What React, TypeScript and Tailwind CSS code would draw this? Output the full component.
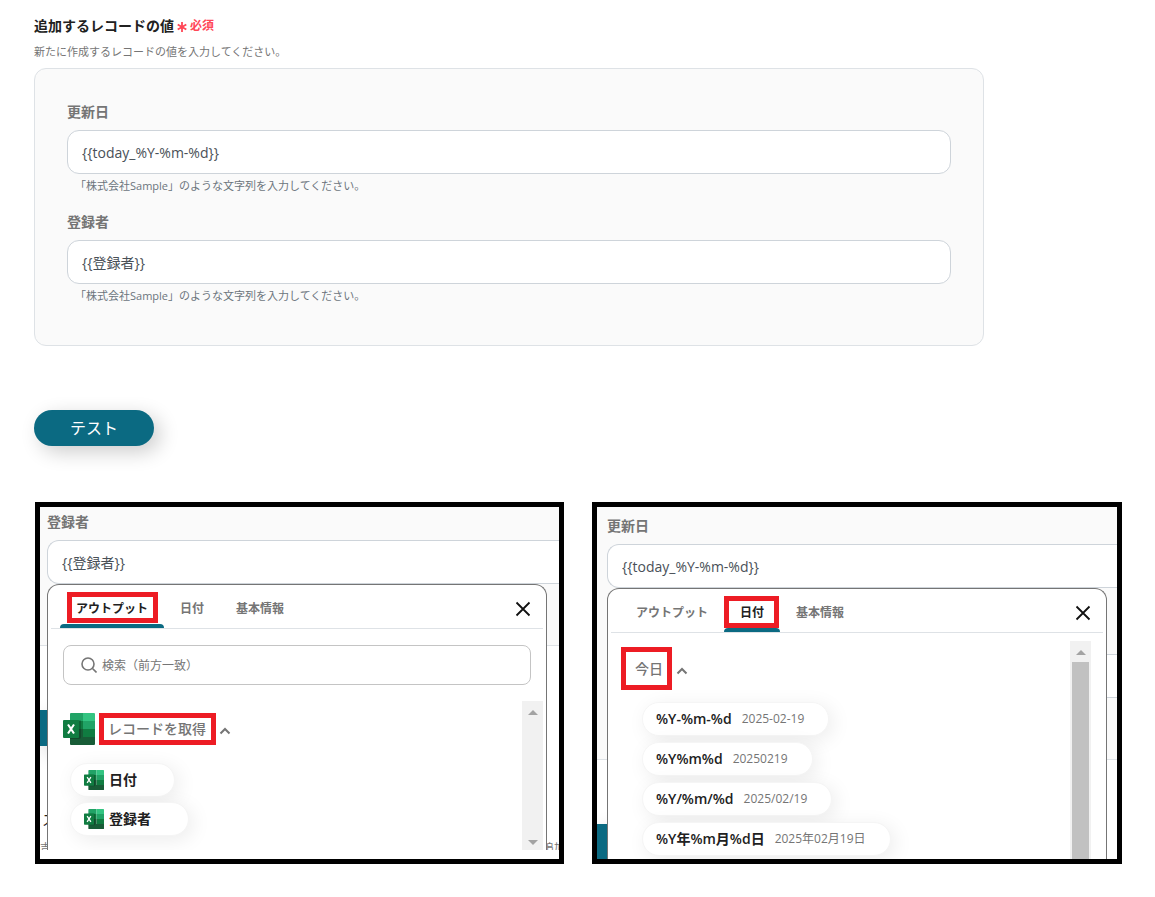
import React, { useState } from 'react';

type TabId = 'output' | 'date' | 'basic';

const tabs: { id: TabId; label: string }[] = [
  { id: 'output', label: 'アウトプット' },
  { id: 'date', label: '日付' },
  { id: 'basic', label: '基本情報' },
];

const dateFormats = [
  { format: '%Y-%m-%d', example: '2025-02-19' },
  { format: '%Y%m%d', example: '20250219' },
  { format: '%Y/%m/%d', example: '2025/02/19' },
  { format: '%Y年%m月%d日', example: '2025年02月19日' },
];

function ExcelIcon({ className }: { className: string }) {
  return (
    <svg viewBox="0 0 32 32" className={className} aria-hidden="true">
      <path d="M8 0h12v8H7V1a1 1 0 0 1 1-1z" fill="#21a366" />
      <path d="M20 0h11a1 1 0 0 1 1 1v7H20z" fill="#33c481" />
      <path d="M7 8h13v8H7z" fill="#107c41" />
      <path d="M20 8h12v8H20z" fill="#21a366" />
      <path d="M20 16h12v8H20z" fill="#107c41" />
      <path d="M7 16h13v8h12v7a1 1 0 0 1-1 1H8a1 1 0 0 1-1-1z" fill="#185c37" />
      <path d="M7 7h10a1 1 0 0 1 1 1v16a2 2 0 0 1-2 2H7z" fill="#000" opacity=".2" />
      <rect y="7" width="16" height="18" rx="1" fill="#107c41" />
      <path d="M5 11.5l6 9M11 11.5l-6 9" stroke="#fff" strokeWidth="2.1" fill="none" />
    </svg>
  );
}

function ChevronUp() {
  return (
    <svg viewBox="0 0 12 8" className="h-2 w-3" fill="none" stroke="#757575" strokeWidth="2" aria-hidden="true">
      <path d="M1.5 6.5L6 2l4.5 4.5" />
    </svg>
  );
}

function Arrow({ down }: { down?: boolean }) {
  return (
    <svg viewBox="0 0 10 5" className="h-[5px] w-[10px]" fill="#a3a3a3" aria-hidden="true">
      <path d={down ? 'M0 0h10L5 5z' : 'M5 0l5 5H0z'} />
    </svg>
  );
}

interface FieldProps {
  id: string;
  label: string;
  initial: string;
  hint?: string;
  className?: string;
}

function Field({ id, label, initial, hint, className = '' }: FieldProps) {
  const [value, setValue] = useState(initial);

  return (
    <div>
      <label htmlFor={id} className="block text-sm leading-5 font-semibold text-[#757575]">{label}</label>
      <input
        id={id}
        type="text"
        value={value}
        onChange={e => setValue(e.target.value)}
        className={`mt-2 block h-11 w-full border border-[#ced4da] bg-white px-[14px] text-sm text-[#495057] ${className || 'rounded-xl'}`}
      />
      {hint && <p className="mt-[2px] pl-2 text-[11px] leading-5 text-[#6c757d]">{hint}</p>}
    </div>
  );
}

interface PickerProps {
  active: TabId;
  markClass: string;
  className: string;
  children: React.ReactNode;
}

// Variable picker that opens under a field
function Picker({ active, markClass, className, children }: PickerProps) {
  return (
    <div className={`absolute flex flex-col overflow-hidden rounded-t-xl border border-b-0 border-[#757575] bg-white ${className}`}>
      <div className="mx-[3px] flex h-11 shrink-0 items-stretch border-b border-[#dee2e6] pl-[9px]">
        {tabs.map(tab => (
          <button
            key={tab.id}
            type="button"
            className={`relative px-4 pt-1 text-xs font-semibold ${tab.id === active ? 'text-[#212121]' : 'text-[#757575]'}`}
          >
            {tab.label}
            {tab.id === active && (
              <>
                <span className="absolute inset-x-0 bottom-0 h-1 rounded-t bg-[#0b6a82]" />
                <span className={`absolute top-[7px] border-[5px] border-[#ed1c24] ${markClass}`} />
              </>
            )}
          </button>
        ))}
        <button type="button" aria-label="閉じる" className="mr-3 ml-auto pt-1">
          <svg viewBox="0 0 16 16" className="h-4 w-4" stroke="#111" strokeWidth="1.8" aria-hidden="true">
            <path d="M1.5 1.5l13 13M14.5 1.5l-13 13" />
          </svg>
        </button>
      </div>
      {children}
    </div>
  );
}

const pill = 'flex h-[34px] items-center rounded-full border border-[#f5f5f5] bg-white pl-[13px] shadow-[4px_4px_20px_rgba(0,0,0,0.08)]';

function OutputPanel() {
  return (
    <div className="relative h-[362px] overflow-hidden border-[5px] border-black bg-white">
      <div className="h-[343px] overflow-hidden">
        <div className="h-[139px] border-b border-[#dee2e6] bg-[#fafafa] pt-[5px] pl-[7px]">
          <Field id="creator-edit" label="登録者" initial="{{登録者}}" className="rounded-l-xl border-r-0" />
        </div>
        <div className="mt-16 h-9 w-20 bg-[#0b6a82] shadow-[6px_6px_20px_rgba(0,0,0,0.2)]" />
        <p className="mt-16 pl-[2px] text-sm leading-5 text-[#212121]">ス</p>
        <p className="mt-2 flex justify-between text-[11px] leading-5 text-[#757575]">
          <span>吉</span>
          <span className="w-4 whitespace-nowrap">追加</span>
        </p>
      </div>
      <Picker active="output" markClass="right-[6px] bottom-[5px] left-[7px]" className="top-[77px] right-3 bottom-[9px] left-[7px]">
        <div className="relative mx-[15px] mt-4 shrink-0">
          <svg viewBox="0 0 16 16" className="absolute top-3 left-[18px] h-4 w-4" fill="none" stroke="#757575" strokeWidth="1.6" aria-hidden="true">
            <circle cx="7" cy="7" r="6" />
            <path d="M11.5 11.5l4 4" />
          </svg>
          <input
            type="search"
            aria-label="検索"
            placeholder="検索（前方一致）"
            className="block h-10 w-full rounded-lg border border-[#c4c4c4] pl-[38px] text-xs text-[#495057] placeholder:text-[#757575]"
          />
        </div>
        <div className="mt-4 mr-[3px] flex min-h-0 flex-1 justify-between pl-[15px]">
          <div className="pt-3">
            <div className="flex items-center">
              <ExcelIcon className="h-8 w-8" />
              <span className="ml-1 flex h-8 items-center border-[5px] border-[#ed1c24] pr-[5px] pl-1 text-sm font-medium text-[#757575]">レコードを取得</span>
              <button type="button" aria-label="折りたたむ" className="ml-[3px] pt-1"><ChevronUp /></button>
            </div>
            <div className="mt-[18px] ml-[7px] flex flex-col items-start gap-[5px]">
              {['日付', '登録者'].map(name => (
                <button key={name} type="button" className={`${pill} gap-[5px] pr-[37px] text-sm font-semibold text-[#212121]`}>
                  <ExcelIcon className="h-5 w-5" />
                  {name}
                </button>
              ))}
            </div>
          </div>
          <div className="flex w-[21px] flex-col items-center justify-between bg-[#f1f1f1] pt-[9px] pb-[5px]">
            <Arrow />
            <Arrow down />
          </div>
        </div>
      </Picker>
    </div>
  );
}

function DatePanel() {
  return (
    <div className="relative h-[362px] overflow-hidden border-[5px] border-black bg-white">
      <div className="h-[253px] border-b border-[#dee2e6] bg-[#fafafa] pt-[9px] pl-[10px]">
        <Field id="updated-edit" label="更新日" initial="{{today_%Y-%m-%d}}" className="rounded-l-xl border-r-0" />
        <div className="mt-[66px] h-11 border-y border-[#ced4da] bg-white" />
      </div>
      <div className="mt-16 h-9 w-20 bg-[#0b6a82] shadow-[6px_6px_20px_rgba(0,0,0,0.2)]" />
      <Picker active="date" markClass="right-px bottom-1 left-0" className="top-[81px] right-[10px] bottom-0 left-[10px]">
        <div className="mt-2 mr-[15px] flex min-h-0 flex-1 justify-between pl-[13px]">
          <div className="pt-[6px]">
            <div className="flex items-center">
              <span className="flex h-[43px] items-center border-[5px] border-[#ed1c24] pr-1 pl-[9px] text-sm font-medium text-[#757575]">今日</span>
              <button type="button" aria-label="折りたたむ" className="ml-1 pt-1"><ChevronUp /></button>
            </div>
            <div className="mt-3 ml-[21px] flex flex-col items-start gap-[6px]">
              {dateFormats.map(item => (
                <button key={item.format} type="button" className={`${pill} gap-[10px] pr-6`}>
                  <span className="text-sm font-semibold text-[#212121]">{item.format}</span>
                  <span className="text-xs text-[#757575]">{item.example}</span>
                </button>
              ))}
            </div>
          </div>
          <div className="flex w-[21px] flex-col items-center bg-[#f1f1f1] pt-[9px]">
            <Arrow />
            <div className="mt-[7px] w-[17px] flex-1 bg-[#c1c1c1]" />
          </div>
        </div>
      </Picker>
    </div>
  );
}

export default function App() {
  return (
    <main className="min-h-screen bg-white pt-4 pr-[33px] pb-8 pl-[34px] font-['Open_Sans','Noto_Sans_CJK_JP',sans-serif]">
      <section className="max-w-[950px]">
        <h2 className="flex items-center gap-[3px] text-sm leading-5 font-semibold text-[#212121]">
          追加するレコードの値
          <span className="flex items-center gap-[3px] text-xs leading-5 text-[#ff4757]">
            <svg viewBox="0 0 10 10" className="mt-[2px] h-[10px] w-[10px]" stroke="currentColor" strokeWidth="1.8" aria-hidden="true">
              <path d="M5 0v10M.7 2.5l8.6 5M9.3 2.5l-8.6 5" />
            </svg>
            必須
          </span>
        </h2>
        <p className="mt-[6px] text-[11px] leading-5 text-[#757575]">新たに作成するレコードの値を入力してください。</p>
        <div className="mt-[6px] flex flex-col gap-4 rounded-xl border border-[#dee2e6] bg-[#fafafa] px-8 pt-[33px] pb-[39px]">
          <Field id="updated" label="更新日" initial="{{today_%Y-%m-%d}}" hint="「株式会社Sample」のような文字列を入力してください。" />
          <Field id="creator" label="登録者" initial="{{登録者}}" hint="「株式会社Sample」のような文字列を入力してください。" />
        </div>
        <button type="button" className="mt-16 h-9 w-[120px] rounded-full bg-[#0b6a82] text-base text-white shadow-[6px_6px_20px_rgba(0,0,0,0.2)]">
          テスト
        </button>
      </section>
      <section className="mt-14 ml-px grid grid-cols-[529fr_530fr] gap-7">
        <OutputPanel />
        <DatePanel />
      </section>
    </main>
  );
}
